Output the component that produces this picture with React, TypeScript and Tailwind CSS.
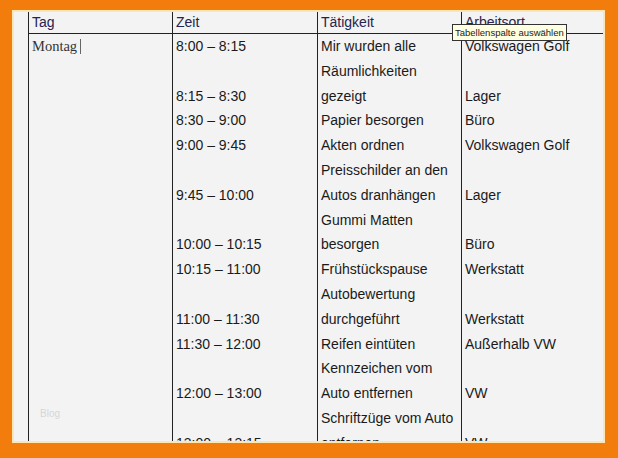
const rows: [string, string, string][] = [
  ["8:00 – 8:15", "Mir wurden alle", "Volkswagen Golf"],
  ["", "Räumlichkeiten", ""],
  ["8:15 – 8:30", "gezeigt", "Lager"],
  ["8:30 – 9:00", "Papier besorgen", "Büro"],
  ["9:00 – 9:45", "Akten ordnen", "Volkswagen Golf"],
  ["", "Preisschilder an den", ""],
  ["9:45 – 10:00", "Autos dranhängen", "Lager"],
  ["", "Gummi Matten", ""],
  ["10:00 – 10:15", "besorgen", "Büro"],
  ["10:15 – 11:00", "Frühstückspause", "Werkstatt"],
  ["", "Autobewertung", ""],
  ["11:00 – 11:30", "durchgeführt", "Werkstatt"],
  ["11:30 – 12:00", "Reifen eintüten", "Außerhalb VW"],
  ["", "Kennzeichen vom", ""],
  ["12:00 – 13:00", "Auto entfernen", "VW"],
  ["", "Schriftzüge vom Auto", ""],
  ["13:00 – 13:15", "entfernen", "VW"],
];

const headers = ["Tag", "Zeit", "Tätigkeit", "Arbeitsort"];

export default function App() {
  return (
    <div className="h-[458px] w-[618px] bg-[#f27d0c] pb-[15px] pl-[12px] pr-[13px] pt-[10px]">
      <div className="relative h-full overflow-hidden border-2 border-[#fde6b2] bg-[#f3f3f3] font-['Liberation_Sans',Arial,sans-serif] text-[14px]">
        <div className="ml-[14px] w-[600px]">
          {/* header */}
          <div className="grid h-[22px] grid-cols-[144px_145px_144px_144px] border-b border-[#222]">
            {headers.map((h) => (
              <div
                key={h}
                className="border-l border-[#222] pl-[3px] leading-[21px] text-[#24244e]"
              >
                {h}
              </div>
            ))}
          </div>

          {/* body */}
          <div className="grid auto-rows-[24.8px] grid-cols-[144px_145px_144px_144px] text-[#1a1a1a]">
            <div className="row-span-17 border-l border-[#222] pl-[3px]">
              <div className="flex items-center leading-[24.8px]">
                <span className="font-['Liberation_Serif','Times_New_Roman',serif] text-[14.5px] text-[#333]">
                  Montag
                </span>
                <span className="ml-[3px] h-[15px] w-px bg-[#666]" />
              </div>
            </div>
            {rows.map(([time, task, place], i) => (
              <div key={i} className="contents">
                <div className="border-l border-[#222] pl-[3px] leading-[24.8px]">
                  {time}
                </div>
                <div className="whitespace-nowrap border-l border-[#222] pl-[3px] leading-[24.8px]">
                  {task}
                </div>
                <div className="border-l border-[#222] pl-[3px] leading-[24.8px]">
                  {place}
                </div>
              </div>
            ))}
          </div>
        </div>

        {/* faint watermark */}
        <div className="absolute left-[26px] top-[394px] text-[10px] text-[#d6d6d6]">
          Blog
        </div>

        {/* tooltip */}
        <div className="absolute left-[438px] top-[12px] border border-[#333] bg-[#ffffe1] px-[2px] text-[9.5px] leading-[15px] text-[#222]">
          Tabellenspalte auswählen
        </div>
      </div>
    </div>
  );
}
